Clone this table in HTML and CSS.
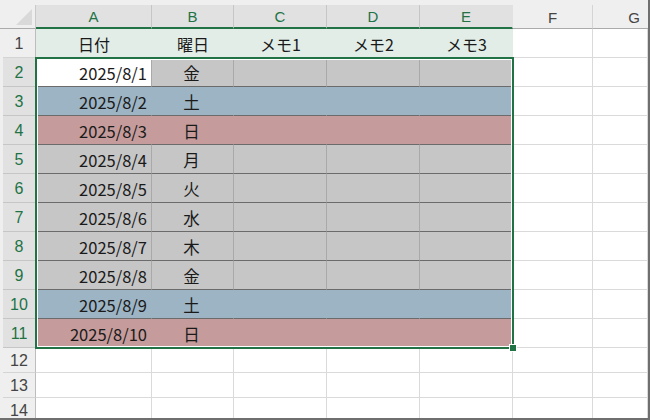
FILE: index.html
```html
<!DOCTYPE html>
<html lang="ja">
<head>
<meta charset="utf-8">
<link rel="stylesheet" href="styles.css">
</head>
<body>
<div class="sheet">
  <div class="corner"><span class="tri"></span></div>
  <div class="ch sel">A</div>
  <div class="ch sel">B</div>
  <div class="ch sel">C</div>
  <div class="ch sel">D</div>
  <div class="ch sel last">E</div>
  <div class="ch">F</div>
  <div class="ch g">G</div>

  <div class="rh">1</div>
  <div class="c head">日付</div>
  <div class="c head">曜日</div>
  <div class="c head">メモ1</div>
  <div class="c head">メモ2</div>
  <div class="c head">メモ3</div>
  <div class="c blank"></div>
  <div class="c blank"></div>

  <div class="rh sel">2</div>
  <div class="c gray date active">2025/8/1</div>
  <div class="c gray day">金</div>
  <div class="c gray"></div>
  <div class="c gray"></div>
  <div class="c gray"></div>
  <div class="c blank"></div>
  <div class="c blank"></div>

  <div class="rh sel">3</div>
  <div class="c blue date">2025/8/2</div>
  <div class="c blue day">土</div>
  <div class="c blue"></div>
  <div class="c blue"></div>
  <div class="c blue"></div>
  <div class="c blank"></div>
  <div class="c blank"></div>

  <div class="rh sel">4</div>
  <div class="c pink date">2025/8/3</div>
  <div class="c pink day">日</div>
  <div class="c pink"></div>
  <div class="c pink"></div>
  <div class="c pink"></div>
  <div class="c blank"></div>
  <div class="c blank"></div>

  <div class="rh sel">5</div>
  <div class="c gray date">2025/8/4</div>
  <div class="c gray day">月</div>
  <div class="c gray"></div>
  <div class="c gray"></div>
  <div class="c gray"></div>
  <div class="c blank"></div>
  <div class="c blank"></div>

  <div class="rh sel">6</div>
  <div class="c gray date">2025/8/5</div>
  <div class="c gray day">火</div>
  <div class="c gray"></div>
  <div class="c gray"></div>
  <div class="c gray"></div>
  <div class="c blank"></div>
  <div class="c blank"></div>

  <div class="rh sel">7</div>
  <div class="c gray date">2025/8/6</div>
  <div class="c gray day">水</div>
  <div class="c gray"></div>
  <div class="c gray"></div>
  <div class="c gray"></div>
  <div class="c blank"></div>
  <div class="c blank"></div>

  <div class="rh sel">8</div>
  <div class="c gray date">2025/8/7</div>
  <div class="c gray day">木</div>
  <div class="c gray"></div>
  <div class="c gray"></div>
  <div class="c gray"></div>
  <div class="c blank"></div>
  <div class="c blank"></div>

  <div class="rh sel">9</div>
  <div class="c gray date">2025/8/8</div>
  <div class="c gray day">金</div>
  <div class="c gray"></div>
  <div class="c gray"></div>
  <div class="c gray"></div>
  <div class="c blank"></div>
  <div class="c blank"></div>

  <div class="rh sel">10</div>
  <div class="c blue date">2025/8/9</div>
  <div class="c blue day">土</div>
  <div class="c blue"></div>
  <div class="c blue"></div>
  <div class="c blue"></div>
  <div class="c blank"></div>
  <div class="c blank"></div>

  <div class="rh sel">11</div>
  <div class="c pink date">2025/8/10</div>
  <div class="c pink day">日</div>
  <div class="c pink"></div>
  <div class="c pink"></div>
  <div class="c pink"></div>
  <div class="c blank"></div>
  <div class="c blank"></div>

  <div class="rh">12</div>
  <div class="c blank"></div><div class="c blank"></div><div class="c blank"></div><div class="c blank"></div><div class="c blank"></div><div class="c blank"></div><div class="c blank"></div>
  <div class="rh">13</div>
  <div class="c blank"></div><div class="c blank"></div><div class="c blank"></div><div class="c blank"></div><div class="c blank"></div><div class="c blank"></div><div class="c blank"></div>
  <div class="rh">14</div>
  <div class="c blank"></div><div class="c blank"></div><div class="c blank"></div><div class="c blank"></div><div class="c blank"></div><div class="c blank"></div><div class="c blank"></div>

  <div class="selection"><span class="handle"></span></div>
</div>
</body>
</html>
```

FILE: styles.css
```css
html, body {
  margin: 0;
  padding: 0;
  width: 650px;
  height: 420px;
  overflow: hidden;
  background: #ffffff;
}

.sheet {
  position: relative;
  box-sizing: border-box;
  width: 650px;
  height: 420px;
  overflow: hidden;
  padding: 5px 0 0 3px;
  background: #efefef;
  border-right: 2px solid #6f6f6f;
  border-bottom: 2px solid #6f6f6f;
  display: grid;
  grid-template-columns: 33px 116px 82px 93px 93px 93px 80px 1fr;
  grid-template-rows: 24px repeat(11, 29px) repeat(3, 25px);
  font-family: "Noto Sans CJK JP", "Noto Sans", sans-serif;
  font-size: 16.5px;
  color: #1a1a1a;
}

.corner {
  position: relative;
  background: #efefef;
  border-right: 1px solid #c9c9c9;
  border-bottom: 1px solid #ababab;
  margin-left: -3px;
}
.tri {
  position: absolute;
  right: 3px;
  bottom: 3px;
  width: 0;
  height: 0;
  border-left: 16px solid transparent;
  border-bottom: 16px solid #d9d9d9;
}

.ch {
  box-sizing: border-box;
  display: flex;
  align-items: center;
  justify-content: center;
  background: #efefef;
  color: #444;
  border-right: 1px solid #d4d4d4;
  border-bottom: 1px solid #ababab;
  font-family: "Liberation Sans", "Noto Sans", sans-serif;
  font-size: 15px;
  padding-top: 1px;
}
.ch.sel {
  background: #e1e1e1;
  color: #217346;
  border-right-color: #c6c6c6;
  border-bottom: 2px solid #217346;
}
.ch.last { border-right-color: #e1e1e1; }
.ch.g { justify-content: flex-end; padding-right: 8px; border-right: none; }

.rh {
  box-sizing: border-box;
  display: flex;
  align-items: center;
  justify-content: center;
  background: #efefef;
  color: #444;
  border-right: 1px solid #bdbdbd;
  border-bottom: 1px solid #d4d4d4;
  font-family: "Liberation Sans", "Noto Sans", sans-serif;
  font-size: 16px;
  padding-top: 2px;
}
.rh.sel {
  background: #e1e1e1;
  color: #217346;
  border-bottom-color: #c6c6c6;
}

.c {
  box-sizing: border-box;
  display: flex;
  align-items: center;
  white-space: nowrap;
  padding-top: 1px;
}
.c.blank {
  background: #ffffff;
  border-right: 1px solid #dadada;
  border-bottom: 1px solid #dadada;
}
.c.head {
  background: #e2ede8;
  justify-content: center;
  font-size: 16px;
}
.c.gray {
  background: #c6c6c6;
  border-right: 1px solid #a9a9a9;
  border-bottom: 1px solid #6b6b6b;
}
.c.blue {
  background: #9cb4c3;
  border-right: 1px solid transparent;
  border-bottom: 1px solid #6b6b6b;
}
.c.pink {
  background: #c59c9b;
  border-right: 1px solid transparent;
  border-bottom: 1px solid #6b6b6b;
}
.c.active { background: #ffffff; }
.c.date {
  justify-content: flex-end;
  padding-right: 4px;
}
.c.day {
  justify-content: center;
  padding-right: 2px;
}

.selection {
  position: absolute;
  left: 35px;
  top: 57px;
  width: 479px;
  height: 292px;
  box-sizing: border-box;
  border: 2px solid #217346;
  box-shadow: inset 0 0 0 1px #ffffff;
  pointer-events: none;
}
.handle {
  position: absolute;
  right: -5px;
  bottom: -5px;
  width: 6px;
  height: 6px;
  background: #217346;
  border: 1px solid #ffffff;
}
```
